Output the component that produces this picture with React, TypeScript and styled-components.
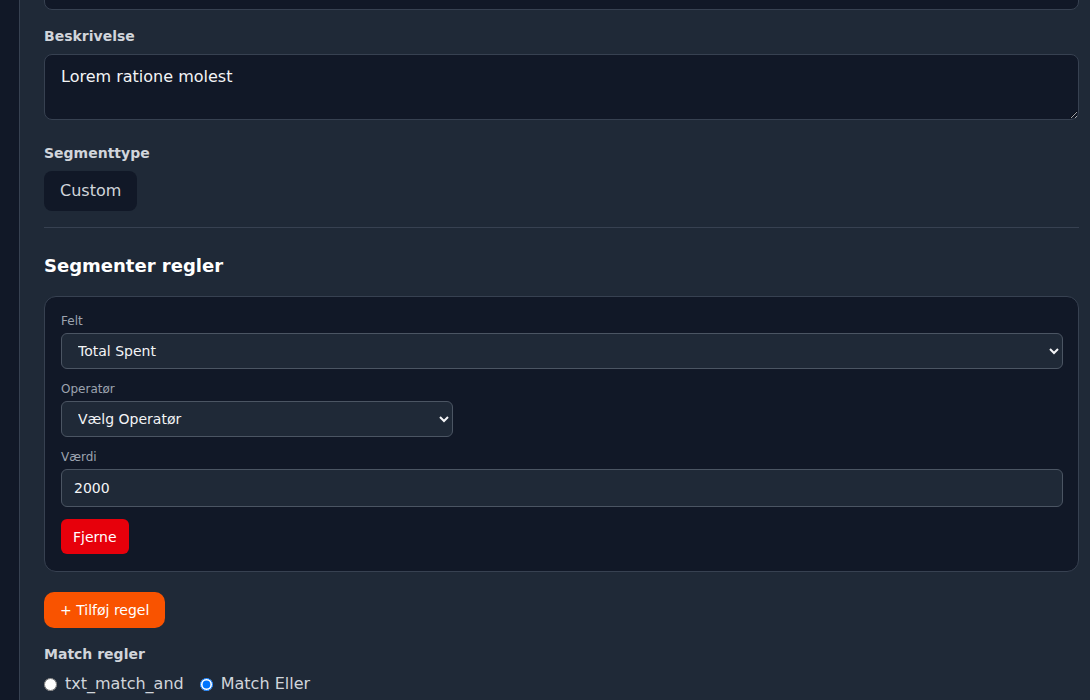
import React, {ReactElement} from 'react';
import styled, {createGlobalStyle} from 'styled-components';

const colors = {
    page: '#1f2937',
    rail: '#111827',
    field: '#111827',
    border: '#374151',
    inputBorder: '#4b5563',
    label: '#d1d5db',
    muted: '#9ca3af',
    text: '#f3f4f6',
    red: '#e7000b',
    orange: '#f95300',
};

const GlobalStyle = createGlobalStyle`
    html, body {
        margin: 0;
        padding: 0;
        height: 100%;
        overflow: hidden;
        background: ${colors.page};
        font-family: 'DejaVu Sans', 'Liberation Sans', sans-serif;
    }
    * {
        box-sizing: border-box;
    }
`;

type SelectProps = {
    wide?: boolean;
};

export default function App(): ReactElement {
    return (
        <>
            <GlobalStyle />
            <Layout>
                <Rail />
                <Main>
                    <Form>
                        <NameInput defaultValue="" />

                        <FieldLabel>Beskrivelse</FieldLabel>
                        <TextArea defaultValue="Lorem ratione molest" />

                        <FieldLabel>Segmenttype</FieldLabel>
                        <TypePill>Custom</TypePill>

                        <Divider />

                        <Heading>Segmenter regler</Heading>

                        <RuleCard>
                            <SmallLabel>Felt</SmallLabel>
                            <Select wide defaultValue="total_spent">
                                <option value="total_spent">Total Spent</option>
                            </Select>

                            <SmallLabel>Operatør</SmallLabel>
                            <Select defaultValue="">
                                <option value="">Vælg Operatør</option>
                            </Select>

                            <SmallLabel>Værdi</SmallLabel>
                            <ValueInput defaultValue="2000" />

                            <RemoveButton type="button">Fjerne</RemoveButton>
                        </RuleCard>

                        <AddButton type="button">+ Tilføj regel</AddButton>

                        <FieldLabel>Match regler</FieldLabel>
                        <RadioRow>
                            <RadioOption>
                                <input type="radio" name="match" value="and" />
                                txt_match_and
                            </RadioOption>
                            <RadioOption>
                                <input type="radio" name="match" value="or" defaultChecked />
                                Match Eller
                            </RadioOption>
                        </RadioRow>
                    </Form>
                </Main>
            </Layout>
        </>
    );
}

const Layout = styled.div`
    display: flex;
    height: 100vh;
    background: ${colors.page};
`;

const Rail = styled.aside`
    width: 20px;
    flex-shrink: 0;
    background: ${colors.rail};
    border-right: 1px solid ${colors.border};
`;

const Main = styled.main`
    flex: 1;
    padding: 0 11px 0 24px;
    overflow: hidden;
`;

const Form = styled.div`
    display: flex;
    flex-direction: column;
    align-items: flex-start;
`;

const NameInput = styled.input`
    width: 100%;
    height: 43px;
    margin-top: -33px;
    margin-bottom: 16px;
    background: ${colors.field};
    border: 1px solid ${colors.border};
    border-radius: 8px;
`;

const FieldLabel = styled.label`
    display: block;
    font-size: 14px;
    line-height: 20px;
    font-weight: 700;
    color: ${colors.label};
    margin-bottom: 8px;
`;

const TextArea = styled.textarea`
    display: block;
    width: 100%;
    height: 66px;
    padding: 10px 16px;
    margin-bottom: 23px;
    background: ${colors.field};
    border: 1px solid ${colors.border};
    border-radius: 8px;
    color: ${colors.text};
    font-family: inherit;
    font-size: 16px;
    line-height: 24px;
    resize: vertical;
    outline: none;
`;

const TypePill = styled.div`
    height: 40px;
    padding: 0 16px 1px;
    display: flex;
    align-items: center;
    background: ${colors.field};
    border-radius: 8px;
    color: ${colors.label};
    font-size: 16px;
`;

const Divider = styled.hr`
    width: 100%;
    margin: 16px 0 24px;
    border: 0;
    border-top: 1px solid ${colors.border};
`;

const Heading = styled.h2`
    margin: 0 0 16px;
    font-size: 18px;
    line-height: 28px;
    font-weight: 700;
    color: #ffffff;
`;

const RuleCard = styled.div`
    width: 100%;
    display: flex;
    flex-direction: column;
    align-items: flex-start;
    padding: 16px 15px 17px 16px;
    background: ${colors.field};
    border: 1px solid ${colors.border};
    border-radius: 12px;
`;

const SmallLabel = styled.label`
    font-size: 12px;
    line-height: 16px;
    color: ${colors.muted};
    margin-bottom: 4px;
`;

const Select = styled.select<SelectProps>`
    width: ${({wide}): string => (wide ? '100%' : '392px')};
    height: 36px;
    padding: 0 12px;
    margin-bottom: 12px;
    background: ${colors.page};
    border: 1px solid ${colors.inputBorder};
    border-radius: 6px;
    color: ${colors.text};
    font-family: inherit;
    font-size: 14px;
    color-scheme: dark;
    outline: none;
`;

const ValueInput = styled.input`
    width: 100%;
    height: 38px;
    padding: 0 12px;
    margin-bottom: 12px;
    background: ${colors.page};
    border: 1px solid ${colors.inputBorder};
    border-radius: 6px;
    color: ${colors.text};
    font-family: inherit;
    font-size: 14px;
    outline: none;
`;

const RemoveButton = styled.button`
    height: 35px;
    padding: 0 12px;
    background: ${colors.red};
    border: 0;
    border-radius: 6px;
    color: #ffffff;
    font-family: inherit;
    font-size: 14px;
`;

const AddButton = styled.button`
    height: 36px;
    margin: 20px 0 16px;
    padding: 0 16px;
    background: ${colors.orange};
    border: 0;
    border-radius: 10px;
    color: #ffffff;
    font-family: inherit;
    font-size: 14px;
`;

const RadioRow = styled.div`
    display: flex;
    align-items: center;
    gap: 16px;
`;

const RadioOption = styled.label`
    display: flex;
    align-items: center;
    gap: 8px;
    color: ${colors.label};
    font-size: 16px;
    line-height: 24px;

    input {
        margin: 0;
        width: 13px;
        height: 13px;
    }
`;
